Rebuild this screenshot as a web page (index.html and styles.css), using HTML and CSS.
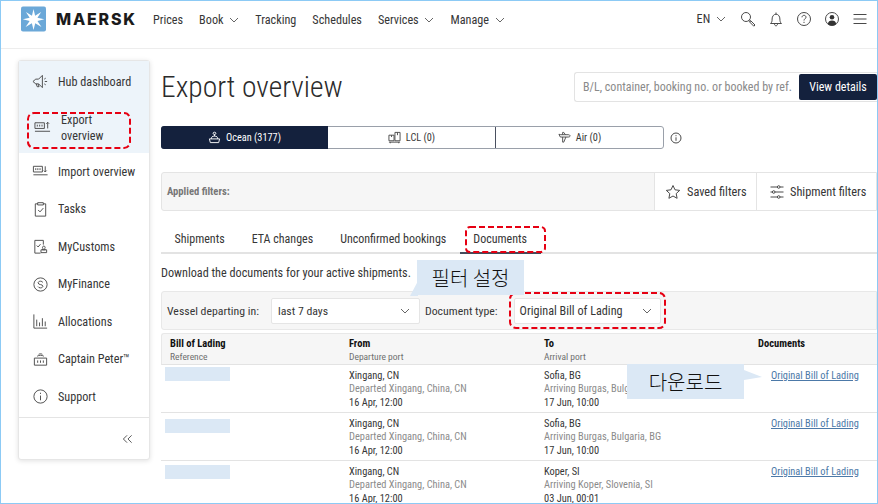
FILE: index.html
```html
<!DOCTYPE html>
<html lang="en">
<head>
<meta charset="utf-8">
<title>Export overview</title>
<link rel="stylesheet" href="styles.css">
</head>
<body>
<div class="frame">
  <header class="topbar">
    <div class="brand">
      <svg class="logo" viewBox="0 0 26 26"><rect width="26" height="26" rx="2" fill="#6ba8d8"/><path d="M13 2.500l1.700 7.200 6.300-3.900-3.900 5.900 7.100 1.600-7.100 1.700 4.200 6.200-6.500-3.900-1.800 7.200-1.700-7.200-6.500 3.900 4.200-6.200-7.100-1.700 7.100-1.600-3.900-5.900 6.300 3.900z" fill="#fff"/></svg>
      <span class="wordmark">MAERSK</span>
    </div>
    <nav class="mainnav">
      <a>Prices</a>
      <a>Book <svg class="chev" viewBox="0 0 10 6"><path d="M1 1l4 4 4-4"/></svg></a>
      <a>Tracking</a>
      <a>Schedules</a>
      <a>Services <svg class="chev" viewBox="0 0 10 6"><path d="M1 1l4 4 4-4"/></svg></a>
      <a>Manage <svg class="chev" viewBox="0 0 10 6"><path d="M1 1l4 4 4-4"/></svg></a>
    </nav>
    <div class="tools">
      <a class="lang">EN <svg class="chev" viewBox="0 0 10 6"><path d="M1 1l4 4 4-4"/></svg></a>
      <svg class="ic tool" viewBox="0 0 16 16"><circle cx="6" cy="6" r="4.500"/><path d="M9.500 9.500l1.200 1.200M10.500 9.500l4.500 4.500-1.200 1.200-4.500-4.500z"/></svg>
      <svg class="ic tool" viewBox="0 0 16 16"><path d="M2.500 12.500c1.200-1 1.600-2 1.600-4.500 0-2.600 1.600-4.800 3.900-4.800s3.900 2.200 3.900 4.800c0 2.500.4 3.500 1.600 4.500zM6.500 13c0 1 .7 1.800 1.500 1.800s1.500-.8 1.500-1.800M8 3.200V1.500"/></svg>
      <svg class="ic tool" viewBox="0 0 16 16"><circle cx="8" cy="8" r="6.500"/><path d="M6 6.300c0-1.200 1-2 2-2s2 .8 2 1.900c0 1.500-2 1.700-2 3.300M8 10.800v1.200"/></svg>
      <svg class="ic tool" viewBox="0 0 16 16"><circle cx="8" cy="8" r="6.500"/><circle class="solid" cx="8" cy="6.300" r="2.300"/><path class="solid" d="M3.800 13c.3-2.400 2-3.500 4.200-3.500s3.900 1.100 4.200 3.500c-1.200 1-2.600 1.500-4.200 1.500S5 14 3.800 13z"/></svg>
      <svg class="ic tool" viewBox="0 0 16 16"><path d="M1.500 3.500h13M1.500 8h13M1.500 12.500h13"/></svg>
    </div>
  </header>

  <div class="workspace">
    <aside class="sidebar">
      <div class="side-active">
        <a class="side-item hub">
          <svg class="ic side-ic" viewBox="0 0 18 18"><path d="M1 9l3-2.500h3L11 2.500v13L7 11.500H4L1 9zM4.500 11.500l1 3h2l-1-3M13 6.500l1.500-1M13.500 9H16M13 11.500l1.500 1"/></svg>
          <span>Hub dashboard</span>
        </a>
        <a class="side-item export">
          <svg class="ic side-ic" viewBox="0 0 18 18"><path d="M1 4h10v6H1zM3.500 6v2M6 6v2M8.500 6v2M14.500 10V3.500M13 5l1.500-1.500L16 5M1 13h16"/></svg>
          <span>Export overview</span>
        </a>
      </div>
      <a class="side-item">
        <svg class="ic side-ic" viewBox="0 0 18 18"><path d="M1.500 3.500h9.500v6H1.500zM4 5.500v2M6.200 5.500v2M8.500 5.500v2M14 3.500v6M12.500 8l1.500 1.500L15.500 8M1.500 12.500h15"/></svg>
        <span>Import overview</span>
      </a>
      <a class="side-item">
        <svg class="ic side-ic" viewBox="0 0 18 18"><path d="M6 3H3.500v13h11V3H12M6 1.800h6v2.400H6zM6.500 9.500l2 2 3.500-4"/></svg>
        <span>Tasks</span>
      </a>
      <a class="side-item">
        <svg class="ic side-ic" viewBox="0 0 18 18"><path d="M9 16H3V2.500h9V7M5 8l1.500 1.500L9 6.500M12.500 8.500a1.500 1.500 0 0 0-1 2.500l-.5 1.500h3l-.5-1.500a1.500 1.500 0 0 0-1-2.500zM9.500 12.500h6v3h-6z"/></svg>
        <span>MyCustoms</span>
      </a>
      <a class="side-item">
        <svg class="ic side-ic" viewBox="0 0 18 18"><circle cx="9" cy="9" r="7"/><path d="M11.500 6.800c-.4-.8-1.400-1.300-2.500-1.300-1.400 0-2.500.7-2.500 1.800 0 2.500 5 1.100 5 3.500 0 1.100-1.100 1.800-2.500 1.800-1.200 0-2.200-.5-2.600-1.400"/></svg>
        <span>MyFinance</span>
      </a>
      <a class="side-item">
        <svg class="ic side-ic" viewBox="0 0 18 18"><path d="M2 1.500V16h14M5 7v7M8 10v4M11 5.500V14M14 9v5"/></svg>
        <span>Allocations</span>
      </a>
      <a class="side-item">
        <svg class="ic side-ic" viewBox="0 0 18 18"><path d="M2.500 7.500h13v7.500h-13zM6 10v2.500M9 10v2.500M12 10v2.500M5.500 5.500c2-1.300 5-1.300 7 0M7 3.500c1.300-.7 2.700-.7 4 0"/></svg>
        <span>Captain Peter™</span>
      </a>
      <a class="side-item">
        <svg class="ic side-ic" viewBox="0 0 18 18"><circle cx="9" cy="9" r="7"/><path d="M9 8v5M9 5v1.300"/></svg>
        <span>Support</span>
      </a>
      <div class="side-foot">
        <svg class="ic collapse" viewBox="0 0 12 10"><path d="M5.500 1L1.500 5l4 4M10.500 1l-4 4 4 4"/></svg>
      </div>
    </aside>

    <main class="content">
      <div class="title-row">
        <h1>Export overview</h1>
        <div class="lookup">
          <span class="placeholder">B/L, container, booking no. or booked by ref.</span>
          <button class="view-btn">View details</button>
        </div>
      </div>

      <div class="mode-row">
        <div class="modes">
          <a class="mode on">
            <svg class="ic mode-ic" viewBox="0 0 14 14"><path d="M1.500 8.500h11l-1 4h-9zM3.500 8.500c0-2 1.200-3 3.500-3s3.500 1 3.500 3M7 5.500V3.500M5.500 2.500a1.500 1.200 0 1 0 3 0 1.500 1.200 0 1 0-3 0"/></svg>
            Ocean (3177)
          </a>
          <a class="mode">
            <svg class="ic mode-ic" viewBox="0 0 14 14"><path d="M1 4.500h5.500v6H1zM7.500 1.500H13v9H7.500zM3.800 4.500v2M10.200 1.500v3M1 12h12M2.500 12v1.200M11.500 12v1.200"/></svg>
            LCL (0)
          </a>
          <a class="mode">
            <svg class="ic mode-ic" viewBox="0 0 14 14"><path d="M1 3.500l1.500 3H11c1.200 0 2-.5 2-1.200S12.200 4 11 4H3zM5 4V1.500h1.200L8 4M5 6.500V12h1.200L8.500 6.500"/></svg>
            Air (0)
          </a>
        </div>
        <svg class="ic mode-info" viewBox="0 0 12 12"><circle cx="6" cy="6" r="5"/><path d="M6 5.300v3.500M6 3.200v1"/></svg>
      </div>

      <div class="filters-bar">
        <span class="applied">Applied filters:</span>
        <a class="filter-btn saved">
          <svg class="ic filter-ic" viewBox="0 0 16 16"><path d="M8 1.500l2 4.300 4.700.6-3.500 3.200.9 4.700L8 12l-4.100 2.300.9-4.700L1.300 6.400 6 5.800z"/></svg>
          Saved filters
        </a>
        <a class="filter-btn shipment">
          <svg class="ic filter-ic" viewBox="0 0 16 16"><path d="M1.500 3h7M11 3h3.500M1.500 8h2M6 8h8.500M1.500 13h7M11 13h3.500"/><circle cx="9.700" cy="3" r="1.300"/><circle cx="4.700" cy="8" r="1.300"/><circle cx="9.700" cy="13" r="1.300"/></svg>
          Shipment filters
        </a>
      </div>

      <div class="tabs">
        <a class="tab">Shipments</a>
        <a class="tab">ETA changes</a>
        <a class="tab">Unconfirmed bookings</a>
        <a class="tab on">Documents</a>
      </div>

      <p class="desc">Download the documents for your active shipments.</p>

      <div class="doc-filter">
        <label class="doc-label">Vessel departing in:</label>
        <div class="select vessel">last 7 days <svg class="chev" viewBox="0 0 10 6"><path d="M1 1l4 4 4-4"/></svg></div>
        <label class="doc-label">Document type:</label>
        <div class="select doctype">Original Bill of Lading <svg class="chev" viewBox="0 0 10 6"><path d="M1 1l4 4 4-4"/></svg></div>
      </div>

      <div class="table">
        <div class="thead">
          <div><b>Bill of Lading</b><small>Reference</small></div>
          <div><b>From</b><small>Departure port</small></div>
          <div><b>To</b><small>Arrival port</small></div>
          <div><b>Documents</b></div>
        </div>
        <div class="row">
          <div></div>
          <div><span>Xingang, CN</span><em>Departed Xingang, China, CN</em><span>16 Apr, 12:00</span></div>
          <div><span>Sofia, BG</span><em>Arriving Burgas, Bulgaria, BG</em><span>17 Jun, 10:00</span></div>
          <div class="doc-cell"><a class="doc-link">Original Bill of Lading</a></div>
        </div>
        <div class="row">
          <div></div>
          <div><span>Xingang, CN</span><em>Departed Xingang, China, CN</em><span>16 Apr, 12:00</span></div>
          <div><span>Sofia, BG</span><em>Arriving Burgas, Bulgaria, BG</em><span>17 Jun, 10:00</span></div>
          <div class="doc-cell"><a class="doc-link">Original Bill of Lading</a></div>
        </div>
        <div class="row">
          <div></div>
          <div><span>Xingang, CN</span><em>Departed Xingang, China, CN</em><span>16 Apr, 12:00</span></div>
          <div><span>Koper, SI</span><em>Arriving Koper, Slovenia, SI</em><span>03 Jun, 00:01</span></div>
          <div class="doc-cell"><a class="doc-link">Original Bill of Lading</a></div>
        </div>
      </div>
    </main>
  </div>

  <div class="mask mask-a"></div>
  <div class="mask mask-b"></div>
  <div class="mask mask-c"></div>

  <svg class="dash dash-export" viewBox="0 0 104 37"><rect x="1" y="1" width="102" height="35" rx="6"/></svg>
  <svg class="dash dash-docs" viewBox="0 0 81 27"><rect x="1" y="1" width="79" height="25" rx="4"/></svg>
  <svg class="dash dash-type" viewBox="0 0 157 37"><rect x="1" y="1" width="155" height="35" rx="6"/></svg>

  <div class="callout filter-note">필터 설정</div>
  <svg class="tail tail-filter" viewBox="0 0 8 15"><path d="M8 0v15H0z"/></svg>
  <div class="callout download-note">다운로드</div>
  <svg class="tail tail-download" viewBox="0 0 18 10"><path d="M0 0l18 7L0 10z"/></svg>
</div>
</body>
</html>
```
FILE: styles.css
```css
* { box-sizing: border-box; }
html, body { margin: 0; padding: 0; }
body { font-family: "Roboto", "Noto Sans", sans-serif; font-stretch: 85%; color: #363636; background: #fff; }
a { color: inherit; text-decoration: none; }

.frame { position: relative; width: 878px; height: 504px; overflow: hidden; border: 1px solid #8ccaf5; }

.ic { fill: none; stroke: #4a4a4a; stroke-width: 1; }
.chev { width: 10px; height: 6px; fill: none; stroke: #555; stroke-width: .9; margin-left: 3px; vertical-align: 1px; }

/* header */
.topbar { display: flex; align-items: center; height: 48px; border-bottom: 1px solid #ededed; padding: 0 9px 11px 20px; }
.brand { display: flex; align-items: center; }
.logo { width: 25px; height: 26px; }
.wordmark { font-family: "Inter", sans-serif; font-weight: 800; font-size: 16px; letter-spacing: 1.800px; color: #1b1b1b; margin-left: 10px; }
.mainnav { display: flex; gap: 16px; margin-left: 16px; padding-top: 1px; font-size: 12.200px; }
.tools { display: flex; align-items: center; gap: 12px; margin-left: auto; font-size: 12.200px; }
.lang { margin-right: 2px; }
.tool { width: 16px; height: 16px; }
.solid { fill: #333; stroke: none; }

/* layout */
.workspace { display: flex; align-items: flex-start; padding: 11px 0 0 17px; gap: 11px; }

/* sidebar */
.sidebar { flex: none; width: 132px; height: 400px; border-radius: 3px; border: 1px solid #e6e6e6; box-shadow: 0 1px 5px rgba(0,0,0,.12); font-size: 12.200px; background: #fff; }
.side-active { background: #edf4fa; }
.side-item { display: flex; align-items: center; gap: 9px; height: 37.500px; padding-left: 13px; }
.side-ic { flex: none; width: 17px; height: 17px; }
.hub { height: 41px; }
.export { height: 51px; padding-left: 15px; gap: 10px; line-height: 16px; }
.export span { width: 60px; }
.side-foot { display: flex; justify-content: flex-end; align-items: center; height: 43px; margin-top: 1.500px; border-top: 1px solid #e4e4e4; padding-right: 16px; }
.collapse { width: 11px; height: 10px; }

/* content */
.content { flex: 1; min-width: 0; }
.title-row { display: flex; align-items: center; justify-content: space-between; height: 42px; padding-top: 11px; }
h1 { margin: 0; padding-top: 1px; font-weight: 300; font-size: 29.500px; line-height: 31px; color: #2b2b2b; }
.lookup { display: flex; align-items: center; justify-content: space-between; width: 303px; height: 30px; border: 1px solid #e3e3e3; border-right: 0; border-radius: 3px 0 0 3px; padding-left: 8px; font-size: 12px; white-space: nowrap; }
.placeholder { color: #8a8a8a; }
.view-btn { width: 78px; height: 26px; border: 0; border-radius: 2px; background: #14213d; color: #fff; font: inherit; font-size: 12px; padding: 0; flex: none; }

.mode-row { display: flex; align-items: center; margin-top: 24px; }
.modes { display: flex; width: 503px; height: 23px; border: 1px solid #9aa0aa; border-radius: 3px; font-size: 10.300px; }
.mode { flex: 1; display: flex; align-items: center; justify-content: center; gap: 5px; border-right: 1px solid #4a5060; }
.mode:last-child { border-right: 0; }
.mode.on { background: #14213d; color: #fff; margin: -1px 0 -1px -1px; border-right: 0; border-radius: 3px 0 0 3px; }
.mode.on .mode-ic { stroke: #fff; }
.mode-ic { width: 13px; height: 13px; }
.mode-info { width: 12px; height: 12px; margin-left: 6px; }

.filters-bar { display: flex; align-items: stretch; height: 39px; margin-top: 23px; background: #f6f6f6; border: 1px solid #e4e4e4; border-radius: 3px 0 0 3px; font-size: 12.300px; }
.applied { margin-right: auto; align-self: center; padding-left: 5px; font-weight: 700; font-size: 10.600px; color: #777; }
.filter-btn { display: flex; align-items: center; gap: 5px; background: #fff; border-left: 1px solid #e4e4e4; padding-left: 10px; }
.saved { width: 102px; gap: 6px; }
.shipment { width: 120px; padding-left: 12px; gap: 5px; }
.filter-ic { width: 16px; height: 16px; }

.tabs { display: flex; height: 29px; margin-top: 14px; border-bottom: 2px solid #e3e3e3; font-size: 12px; }
.tab { padding: 0 13.500px; line-height: 28px; height: 29px; }
.tab.on { border-bottom: 2px solid #454c5c; }

.desc { margin: 11px 0 0; font-size: 12.200px; line-height: 16px; }

.doc-filter { display: flex; align-items: center; height: 39px; margin-top: 10px; padding-left: 5px; background: #f6f6f6; border: 1px solid #e8e8e8; border-radius: 3px 0 0 3px; font-size: 11.800px; }
.doc-label { flex: none; }
.select { display: flex; align-items: center; justify-content: space-between; height: 26px; background: #fff; border: 1px solid #e5e5e5; border-radius: 2px; }
.vessel { width: 149px; margin: 0 5px 0 12px; padding: 0 9px 0 6px; }
.doctype { width: 147px; margin: 0 0 0 16px; padding: 0 8px 0 5px; font-size: 12.200px; }

.table { margin-top: 3px; font-size: 10.400px; }
.thead, .row { display: grid; grid-template-columns: 179px 195px 214px 1fr; border-bottom: 1px solid #e3e3e3; }
.thead { height: 32px; background: #f6f6f6; border-top: 1px solid #e8e8e8; border-left: 1px solid #e8e8e8; border-radius: 3px 0 0 0; color: #111; }
.thead > div { padding: 3px 0 0 8px; }
.thead b { display: block; font-size: 10.500px; line-height: 13px; }
.thead small { display: block; font-size: 9.500px; line-height: 13px; color: #6f6f6f; }
.row { height: 48px; }
.row > div { padding: 4px 0 0 9px; line-height: 13.300px; }
.row span, .row em { display: block; }
.row em { font-style: normal; color: #8b8b8b; }
.row .doc-cell { padding-left: 22px; }
.doc-link { color: #4c79a8; text-decoration: underline; }

/* annotations */
.mask { position: absolute; left: 164px; width: 65px; height: 14px; background: #dbe8f5; }
.mask-a { top: 366px; }
.mask-b { top: 418px; }
.mask-c { top: 464px; }
.dash { position: absolute; fill: none; stroke: #e60012; stroke-width: 2; stroke-dasharray: 6 3; }
.dash-export { left: 26px; top: 111px; width: 104px; height: 37px; }
.dash-docs { left: 464px; top: 225px; width: 81px; height: 27px; }
.dash-type { left: 508px; top: 291px; width: 157px; height: 37px; }
.callout { position: absolute; display: flex; align-items: center; justify-content: center; background: #dbe8f5; color: #111; font-family: "Noto Sans CJK KR", sans-serif; font-size: 20px; font-weight: 300; }
.filter-note { left: 416px; top: 259px; width: 107px; height: 35px; }
.download-note { left: 626px; top: 363px; width: 117px; height: 35px; }
.tail { position: absolute; fill: #dbe8f5; }
.tail-filter { left: 409px; top: 280px; width: 8px; height: 15px; }
.tail-download { left: 743px; top: 369px; width: 18px; height: 10px; }
```
